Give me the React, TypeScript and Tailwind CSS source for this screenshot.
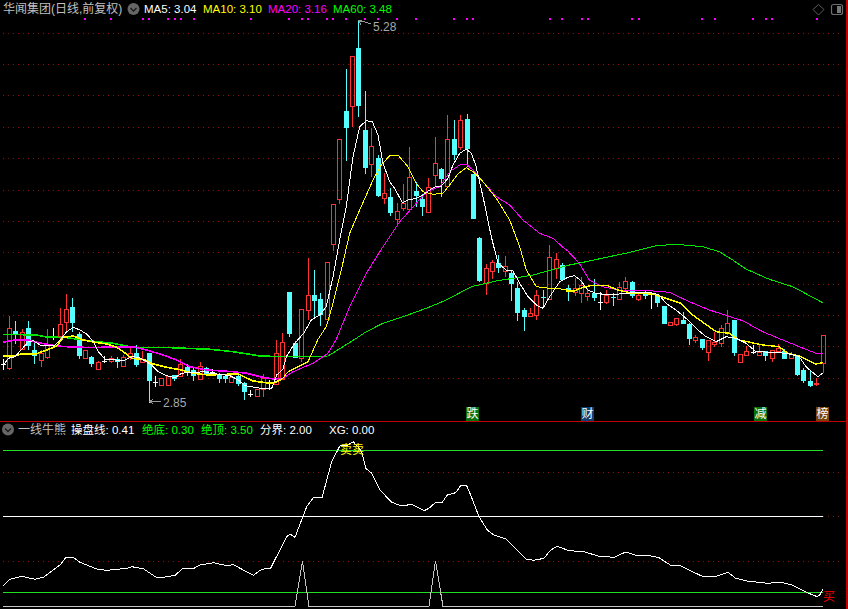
import React from "react";

type C = [number, number, number, number, string];
// high, body top, body bottom, low, kind (r red hollow, c cyan solid, w white cross)
const candles: C[] = [
  [359,364,365,370,"w"],[316,328,368,370,"r"],[321,331,335,344,"c"],[329,332,349,350,"r"],[321,328,346,350,"c"],
  [342,350,356,364,"c"],[350,353,360,367,"r"],[329,344,357,359,"r"],[328,337,338,340,"w"],[308,324,336,340,"r"],
  [294,309,322,333,"r"],[298,307,323,332,"c"],[332,334,356,359,"c"],[350,350,358,358,"r"],[356,357,364,367,"c"],
  [361,362,369,370,"r"],[356,361,362,363,"w"],[356,358,361,363,"r"],[357,359,362,368,"c"],[355,357,366,367,"r"],
  [347,353,357,360,"r"],[345,353,365,367,"c"],[351,359,362,363,"r"],[353,353,381,403,"c"],[376,382,383,387,"w"],
  [378,378,385,385,"r"],[376,376,385,385,"r"],[375,375,379,381,"c"],[359,364,376,377,"r"],[364,367,373,376,"c"],
  [368,370,376,381,"c"],[362,366,379,380,"r"],[367,368,375,376,"c"],[369,372,373,376,"w"],[373,374,379,383,"c"],
  [376,376,379,383,"c"],[373,377,382,383,"r"],[373,376,384,386,"c"],[382,383,392,400,"c"],[390,394,395,397,"w"],
  [389,389,396,396,"r"],[374,378,389,397,"r"],[380,383,384,390,"w"],[340,353,384,384,"r"],[333,342,379,379,"r"],
  [292,292,334,337,"c"],[341,343,358,358,"c"],[309,309,358,362,"r"],[258,295,310,320,"r"],[270,295,301,317,"c"],
  [293,299,315,326,"c"],[262,262,319,320,"r"],[204,204,244,251,"r"],[139,139,199,204,"r"],[69,111,128,161,"c"],
  [56,56,106,127,"r"],[21,48,106,117,"c"],[91,130,168,174,"c"],[128,146,164,177,"r"],[155,158,196,197,"c"],
  [173,193,198,204,"r"],[188,197,213,216,"c"],[203,211,219,224,"r"],[184,203,208,211,"r"],[147,177,209,211,"r"],
  [182,191,196,207,"c"],[194,199,207,216,"c"],[178,187,212,213,"r"],[137,163,175,187,"r"],[168,169,179,197,"c"],
  [115,139,186,186,"r"],[120,139,155,160,"c"],[115,120,147,150,"r"],[114,119,149,167,"c"],[174,174,219,219,"c"],
  [237,238,281,282,"c"],[264,268,283,295,"r"],[260,262,271,279,"r"],[255,263,268,273,"c"],[256,266,271,277,"r"],
  [270,273,284,301,"c"],[282,288,313,321,"c"],[308,310,317,331,"c"],[308,313,316,317,"r"],[290,295,315,320,"r"],
  [290,297,298,307,"c"],[245,257,299,299,"r"],[253,259,268,279,"r"],[263,265,280,281,"c"],[285,288,292,301,"c"],
  [278,288,292,296,"r"],[277,285,293,303,"r"],[288,293,296,301,"r"],[279,293,298,301,"c"],[292,302,303,310,"w"],
  [290,295,302,304,"r"],[293,297,298,306,"c"],[282,287,299,299,"r"],[277,281,288,292,"r"],[281,282,296,298,"c"],
  [292,295,299,301,"r"],[290,293,296,299,"c"],[292,294,295,309,"w"],[295,296,303,307,"c"],[306,306,324,324,"c"],
  [322,322,325,326,"r"],[318,318,324,326,"r"],[312,320,324,324,"c"],[323,324,339,345,"c"],[335,337,340,343,"r"],
  [339,339,348,350,"c"],[340,340,352,361,"r"],[332,342,344,347,"r"],[325,328,343,347,"r"],[310,323,333,335,"r"],
  [320,320,353,356,"c"],[354,354,362,362,"r"],[346,351,355,356,"r"],[345,352,353,354,"w"],[345,352,355,356,"r"],
  [351,351,356,361,"c"],[350,350,358,362,"r"],[344,348,351,353,"r"],[349,351,359,359,"c"],[352,354,358,358,"r"],
  [356,356,375,376,"c"],[368,370,381,383,"c"],[371,381,386,387,"c"],[378,383,384,386,"r"],[335,335,363,373,"r"],
];

const conv = (ox: number, oy: number, pts: number[][]) =>
  pts.map(([x, y]) => `${(ox + x / 3).toFixed(1)},${(oy + y / 3).toFixed(1)}`).join(" ");

const ma5 = [
  conv(0, 210, [[10,465],[25,445],[45,440],[65,418],[85,395],[100,392],[120,405],[140,408],[165,405],[180,390],[200,365],[220,352],[240,360],[260,372],[280,395],[295,425],[315,447],[335,447],[355,452],[375,450],[395,440],[415,442],[435,452],[455,465],[475,485],[500,497],[525,503],[545,490],[565,487],[590,487],[610,485],[630,490],[660,493],[690,497],[715,510],[735,527],[770,533],[800,537],[815,535],[830,495],[849,478]]),
  conv(283, 100, [[10,770],[35,730],[62,700],[85,660],[110,645],[130,620],[150,530],[170,420],[190,320],[210,170],[230,80],[250,62],[268,65],[285,105],[300,190],[320,245],[335,265],[358,308],[375,300],[400,295],[420,285],[440,270],[460,258],[475,258],[495,235],[510,195],[530,160],[550,147],[565,160],[578,195],[600,290],[625,410],[645,490],[670,510],[690,513],[710,550],[735,590],[760,615],[780,625],[800,590],[830,545],[849,535]]),
  conv(566, 230, [[0,143],[25,137],[45,152],[65,180],[90,190],[130,195],[160,192],[200,188],[250,187],[280,195],[300,220],[330,240],[360,265],[390,295],[420,320],[450,335],[480,320],[510,325],[540,340],[570,365],[620,367],[660,370],[700,380],[720,410],[755,440],[770,430]]),
].join(" ");

const ma10L = conv(0, 210, [[10,439],[40,438],[65,432],[105,433],[140,420],[170,408],[190,382],[220,378],[250,390],[280,396],[320,402],[350,412],[370,425],[395,445],[435,450],[460,462],[500,472],[545,480],[580,490],[625,495],[680,493],[715,492],[735,502],[760,513],[810,520],[830,515],[849,505]]);
const ma10R = conv(566, 230, [[0,183],[25,183],[50,172],[80,166],[125,167],[155,180],[200,190],[260,192],[300,205],[345,220],[380,255],[415,280],[450,305],[490,310],[520,330],[590,345],[640,350],[665,370],[700,378],[750,402],[770,398]]);
const ma10 = [
  ma10L,
  conv(283, 100, [[15,815],[45,800],[75,785],[105,718],[130,680],[150,610],[175,510],[200,400],[230,330],[270,240],[295,195],[320,167],[345,165],[375,200],[400,250],[420,275],[450,283],[480,280],[500,255],[525,222],[550,203],[570,215],[600,245],[640,295],[680,360],[710,440],[730,510],[760,560],[800,565],[849,568]]),
  ma10R,
].join(" ");

const ma20L = conv(0, 210, [[10,397],[45,390],[85,390],[110,397],[140,403],[170,408],[200,410],[280,413],[340,410],[400,410],[440,420],[490,435],[530,450],[570,470],[620,480],[700,485],[740,490],[780,500],[820,507],[849,505]]);
const ma20 = [
  ma20L,
  conv(283, 100, [[30,815],[90,790],[135,760],[160,718],[200,620],[250,520],[300,440],[350,365],[400,310],[430,275],[470,260],[500,215],[530,195],[550,192],[575,215],[600,245],[640,290],[680,315],[720,360],[770,400],[810,415],[849,450]]),
  conv(566, 230, [[0,57],[40,100],[70,150],[110,170],[160,180],[250,182],[310,187],[370,215],[430,240],[530,272],[590,305],[650,330],[700,350],[750,370],[770,370]]),
].join(" ");

const ma60L = conv(0, 210, [[10,373],[110,375],[135,380],[200,383],[290,395],[340,400],[400,412],[515,413],[630,418],[700,425],[780,438],[849,440]]);
const ma60 = [
  ma60L,
  conv(283, 100, [[135,768],[215,718],[250,695],[300,670],[360,650],[430,625],[490,600],[565,560],[640,543],[750,525],[849,498]]),
  conv(566, 230, [[0,107],[60,95],[130,80],[200,65],[270,47],[330,43],[410,50],[460,65],[500,90],[540,117],[610,148],[680,170],[770,218]]),
].join(" ");

const osc = [
  conv(0, 415, [[9,512],[30,493],[65,484],[105,493],[130,487],[180,450],[198,427],[220,427],[240,442],[290,462],[320,466],[380,460],[395,455],[430,461],[470,488],[495,486],[525,481],[550,459],[580,461],[600,450],[640,443],[680,452],[700,449],[730,465],[760,481],[785,463],[812,459],[860,365],[870,357],[885,367],[920,275],[940,248],[966,248],[995,140],[1020,92],[1040,92],[1060,80],[1085,110],[1097,160],[1115,175],[1140,225],[1175,262],[1205,273],[1235,268],[1272,287]]),
  conv(424, 415, [[15,280],[35,262],[55,262],[70,240],[95,233],[110,212],[128,212],[140,240],[165,305],[190,345],[210,360],[245,372],[270,395],[305,432],[330,436],[360,430],[380,405],[400,394],[435,407],[480,410],[525,424],[570,427],[605,411],[635,421],[670,421],[705,428],[740,451],[770,453],[835,484],[870,486],[912,472],[935,490],[970,498],[1030,505],[1070,502],[1105,510],[1150,533],[1180,545],[1187,540],[1197,522]]),
].join(" ");

const mainGrid = [33, 64, 95, 127, 158, 190, 221, 252, 284, 315, 346, 378];
const dotsTop = [85,111,143,149,168,175,181,194,251,289,302,308,327,333,346,365,378,397,416,454,467,473,550,562,582,588,632,639,702,715,753,766,772,817];

function Chevron({ cx, cy }: { cx: number; cy: number }) {
  return (
    <g>
      <circle cx={cx} cy={cy} r={6} fill="#666666" />
      <polyline points={`${cx - 3},${cy - 1} ${cx},${cy + 2} ${cx + 3},${cy - 1}`} fill="none" stroke="#1a1a1a" strokeWidth={1.3} />
    </g>
  );
}

function Badge({ left, bg, text }: { left: number; bg: string; text: string }) {
  return (
    <div
      className="absolute top-[407px] flex h-[14px] w-[13px] items-center justify-center overflow-hidden text-[12px] leading-none text-white"
      style={{ left, background: bg }}
    >
      {text}
    </div>
  );
}

export default function App() {
  const font = { fontFamily: '"Liberation Sans", "Noto Sans CJK SC", sans-serif' };
  return (
    <div className="relative h-[609px] w-[848px] overflow-hidden bg-black" style={font}>
      <svg className="absolute left-0 top-0" width={848} height={609} viewBox="0 0 848 609">
        <g shapeRendering="crispEdges">
          {mainGrid.map((y) => (
            <line key={y} x1={3} x2={843} y1={y + 0.5} y2={y + 0.5} stroke="#8a0f0f" strokeDasharray="1 4" />
          ))}
          {[472, 561].map((y) => (
            <line key={y} x1={3} x2={843} y1={y + 0.5} y2={y + 0.5} stroke="#8a0f0f" strokeDasharray="1 4" />
          ))}
          <line x1={823} x2={843} y1={516.5} y2={516.5} stroke="#8a0f0f" strokeDasharray="1 4" />
          <rect x={0} y={421} width={848} height={1} fill="#c00000" />
          <rect x={846} y={0} width={2} height={609} fill="#c00000" />
          {dotsTop.map((x) => (
            <rect key={x} x={x - 1} y={18} width={2} height={2} fill="#ff00ff" />
          ))}
          {candles.map(([h, t, b, l, k], i) => {
            const x = Math.floor(3 + 6.357 * i);
            if (k === "r")
              return (
                <g key={i}>
                  <rect x={x} y={h} width={1} height={Math.max(t - h, 0)} fill="#ff3232" />
                  <rect x={x} y={b} width={1} height={Math.max(l - b, 0)} fill="#ff3232" />
                  <rect x={x - 1.5} y={t + 0.5} width={4} height={b - t} fill="none" stroke="#ff3232" />
                </g>
              );
            if (k === "c")
              return (
                <g key={i}>
                  <rect x={x} y={h} width={1} height={l - h} fill="#54ffff" />
                  <rect x={x - 2} y={t} width={5} height={b - t} fill="#54ffff" />
                </g>
              );
            return (
              <g key={i}>
                <rect x={x} y={h} width={1} height={l - h} fill="#ffffff" />
                <rect x={x - 2} y={t} width={5} height={1} fill="#ffffff" />
              </g>
            );
          })}
          <polyline points={ma60} fill="none" stroke="#00e800" />
          <polyline points={ma60L} fill="none" stroke="#00e800" strokeWidth={1.6} />
          <polyline points={ma20} fill="none" stroke="#ff00ff" />
          <polyline points={ma20L} fill="none" stroke="#ff00ff" strokeWidth={1.6} />
          <polyline points={ma10} fill="none" stroke="#ffff00" />
          <polyline points={ma10L} fill="none" stroke="#ffff00" strokeWidth={1.6} />
          <polyline points={ma10R} fill="none" stroke="#ffff00" strokeWidth={1.4} />
          <polyline points={ma5} fill="none" stroke="#ffffff" />

          <rect x={3} y={450} width={820} height={1} fill="#22dd22" />
          <rect x={3} y={592} width={820} height={1} fill="#22dd22" />
          <rect x={3} y={516} width={820} height={1} fill="#ffffff" />
          <polyline
            points="3,606.5 295,606.5 302.5,561 309,606.5 429,606.5 435.5,561 443,606.5 823,606.5"
            fill="none"
            stroke="#c4c4c4"
          />
          <polyline points={osc} fill="none" stroke="#ffffff" />

          {/* annotation arrows */}
          <polyline points="359,20 371,24" fill="none" stroke="#9a9a9a" />
          <polyline points="362,22 359,20.5 361,25" fill="none" stroke="#9a9a9a" />
          <polyline points="150,401.5 161,401.5" fill="none" stroke="#9a9a9a" />
          <polyline points="153,399 150,401.5 153,404" fill="none" stroke="#9a9a9a" />
        </g>

        <Chevron cx={133.5} cy={9} />
        <Chevron cx={8} cy={429.5} />
        {/* top-right icons */}
        <polygon points="818.5,4.5 824,9.5 818.5,15 813,9.5" fill="none" stroke="#5c5c5c" />
        <rect x={831.5} y={4.5} width={11} height={10} rx={2} fill="none" stroke="#6e6e6e" strokeWidth={1.2} />
        <rect x={837} y={6} width={4} height={7} fill="#777777" />
      </svg>

      <span className="absolute left-[3px] top-[2px] whitespace-nowrap text-[12px] leading-[15px] text-[#c0c0c0]">华闻集团(日线,前复权)</span>
      <span className="absolute left-[144px] top-[2px] whitespace-nowrap text-[11.5px] leading-[15px] text-white">MA5: 3.04</span>
      <span className="absolute left-[203px] top-[2px] whitespace-nowrap text-[11.5px] leading-[15px] text-[#ffff00]">MA10: 3.10</span>
      <span className="absolute left-[268px] top-[2px] whitespace-nowrap text-[11.5px] leading-[15px] text-[#ff00ff]">MA20: 3.16</span>
      <span className="absolute left-[333px] top-[2px] whitespace-nowrap text-[11.5px] leading-[15px] text-[#00ff00]">MA60: 3.48</span>

      <span className="absolute left-[373px] top-[20px] text-[12px] leading-[15px] text-[#a8a8a8]">5.28</span>
      <span className="absolute left-[163px] top-[396px] text-[12px] leading-[15px] text-[#a8a8a8]">2.85</span>

      <Badge left={466} bg="#0a700a" text="跌" />
      <Badge left={581} bg="#0e3f70" text="财" />
      <Badge left={754} bg="#0a700a" text="减" />
      <Badge left={816} bg="#7a4208" text="榜" />

      <span className="absolute left-[18px] top-[423px] whitespace-nowrap text-[12px] leading-[15px] text-[#c0c0c0]">一线牛熊</span>
      <span className="absolute left-[71px] top-[423px] whitespace-nowrap text-[11.5px] leading-[15px] text-white">操盘线: 0.41</span>
      <span className="absolute left-[142px] top-[423px] whitespace-nowrap text-[11.5px] leading-[15px] text-[#00ff00]">绝底: 0.30</span>
      <span className="absolute left-[201px] top-[423px] whitespace-nowrap text-[11.5px] leading-[15px] text-[#00ff00]">绝顶: 3.50</span>
      <span className="absolute left-[260px] top-[423px] whitespace-nowrap text-[11.5px] leading-[15px] text-white">分界: 2.00</span>
      <span className="absolute left-[329px] top-[423px] whitespace-nowrap text-[11.5px] leading-[15px] text-white">XG: 0.00</span>

      <span className="absolute left-[340px] top-[443px] text-[12px] leading-[14px] text-[#ffff00]">卖</span>
      <span className="absolute left-[352px] top-[443px] text-[12px] leading-[14px] text-[#ffff00]">卖</span>
      <span className="absolute left-[823px] top-[590px] text-[12px] leading-[14px] text-[#ff0000]">买</span>
    </div>
  );
}
